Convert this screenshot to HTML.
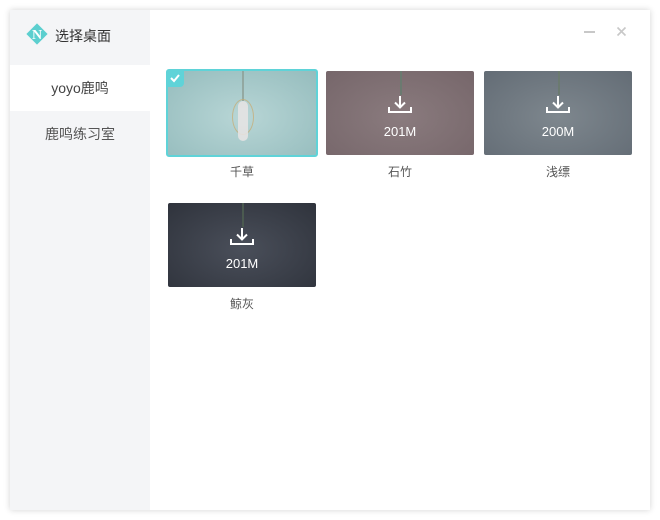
<!DOCTYPE html>
<html><head><meta charset="utf-8"><style>
body{margin:0;width:660px;height:520px;background:#fff;font-family:"Liberation Sans","Noto Sans CJK SC",sans-serif;position:relative;overflow:hidden}
.win{position:absolute;left:10px;top:10px;width:640px;height:500px;background:#fff;box-shadow:0 0 6px rgba(0,0,0,.18)}
.side{position:absolute;left:0;top:0;width:140px;height:500px;background:#f4f5f7}
.logo{position:absolute;left:16px;top:13px;width:22px;height:22px}
.title{position:absolute;left:45px;top:16px;font-size:14px;color:#333}
.item{position:absolute;left:0;width:140px;height:46px;line-height:47px;text-align:center;font-size:14px;color:#555}
.card{position:absolute;width:148px;height:84px;border-radius:2px;overflow:hidden}
.lbl{position:absolute;width:148px;text-align:center;font-size:12px;color:#555}
.dl{position:absolute;left:0;top:0;width:148px;height:84px}
.sz{position:absolute;width:148px;text-align:center;top:53px;color:#fff;font-size:13px}
</style></head><body>
<div class="win">
<div class="side">
<svg class="logo" viewBox="0 0 22 22"><rect x="3.5" y="3.5" width="15" height="15" transform="rotate(45 11 11)" fill="#5ccfcf"/><text x="11" y="16" text-anchor="middle" font-size="14" font-family="Liberation Serif" font-weight="bold" fill="#fff">N</text></svg>
<div class="title">选择桌面</div>
<div class="item" style="top:55px;background:#fff;color:#444">yoyo鹿鸣</div>
<div class="item" style="top:101px">鹿鸣练习室</div>
</div>
<div style="position:absolute;left:574px;top:21px;width:11px;height:2px;background:#c8c8c8"></div>
<svg style="position:absolute;left:606px;top:16px" width="11" height="11" viewBox="0 0 11 11"><path d="M1.5 1.5L9.5 9.5M9.5 1.5L1.5 9.5" stroke="#c8c8c8" stroke-width="1.6"/></svg>

<div class="card" style="left:156px;top:59px;width:152px;height:88px;border-radius:3px;background:radial-gradient(ellipse at 50% 55%,#b8d6d6,#95bcbd);box-sizing:border-box;border:2px solid #5fd3d8">
<div style="position:absolute;left:74px;top:0;width:2px;height:30px;background:#8a9a90;opacity:.7"></div>
<div style="position:absolute;left:64px;top:28px;width:20px;height:34px;border:1px solid #c9a96d;border-radius:50%;opacity:.7"></div>
<div style="position:absolute;left:70px;top:30px;width:10px;height:40px;background:#e8e4e4;border-radius:5px;opacity:.85"></div>
<div style="position:absolute;left:-2px;top:-2px;width:18px;height:18px;background:#5fd3d8;border-bottom-right-radius:4px"></div>
<svg style="position:absolute;left:1px;top:2px" width="12" height="10" viewBox="0 0 12 10"><path d="M2 5L5 8L10 2" stroke="#fff" stroke-width="2" fill="none"/></svg>
</div>
<div class="lbl" style="left:158px;top:153px">千草</div>

<div class="card" style="left:316px;top:61px;background:radial-gradient(ellipse at 50% 55%,#8a7b7e,#76666a)">
<div style="position:absolute;left:74px;top:0;width:2px;height:24px;background:#6b7a70"></div>
<svg class="dl" viewBox="0 0 148 84"><path d="M74 25V36M69 31.5L74 36.5L79 31.5M63 36V41H85V36" stroke="#fff" stroke-width="2" fill="none"/></svg>
<div class="sz">201M</div></div>
<div class="lbl" style="left:316px;top:153px">石竹</div>

<div class="card" style="left:474px;top:61px;background:radial-gradient(ellipse at 50% 55%,#7e878e,#636c75)">
<div style="position:absolute;left:74px;top:0;width:2px;height:24px;background:#6b7a70"></div>
<svg class="dl" viewBox="0 0 148 84"><path d="M74 25V36M69 31.5L74 36.5L79 31.5M63 36V41H85V36" stroke="#fff" stroke-width="2" fill="none"/></svg>
<div class="sz">200M</div></div>
<div class="lbl" style="left:474px;top:153px">浅缥</div>

<div class="card" style="left:158px;top:193px;background:radial-gradient(ellipse at 50% 55%,#4a4f5a,#2f333c)">
<div style="position:absolute;left:74px;top:0;width:2px;height:24px;background:#4b5a50"></div>
<svg class="dl" viewBox="0 0 148 84"><path d="M74 25V36M69 31.5L74 36.5L79 31.5M63 36V41H85V36" stroke="#fff" stroke-width="2" fill="none"/></svg>
<div class="sz">201M</div></div>
<div class="lbl" style="left:158px;top:285px">鲸灰</div>
</div>
</body></html>
